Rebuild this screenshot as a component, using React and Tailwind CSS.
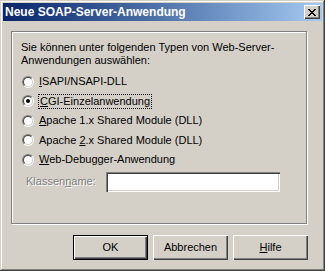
import React from "react";

const font = { fontFamily: '"Liberation Sans", Arial, sans-serif' };

function Radio({ checked }) {
  return (
    <span className="inline-flex h-[12px] w-[12px] shrink-0 rounded-full border border-t-[#808080] border-l-[#808080] border-b-white border-r-white">
      <span className="flex h-full w-full items-center justify-center rounded-full border border-t-[#404040] border-l-[#404040] border-b-[#d4d0c8] border-r-[#d4d0c8] bg-white">
        {checked && <span className="h-[4px] w-[4px] rounded-full bg-black" />}
      </span>
    </span>
  );
}

function Option({ children, checked, focused }) {
  return (
    <div className="flex h-[19.5px] items-center">
      <Radio checked={checked} />
      <span className={focused ? "ml-[4px] border border-dotted border-black px-px leading-[13px]" : "ml-[5px] leading-[13px]"}>
        {children}
      </span>
    </div>
  );
}

function Button({ children, isDefault }) {
  if (isDefault) {
    return (
      <button className="h-[25px] w-[75px] border border-black bg-[#d4d0c8] text-[11px] text-black shadow-[inset_1px_1px_0_#fff,inset_-1px_-1px_0_#404040,inset_-2px_-2px_0_#808080]">
        {children}
      </button>
    );
  }
  return (
    <button className="h-[25px] w-[75px] bg-[#d4d0c8] text-[11px] text-black shadow-[inset_1px_1px_0_#fff,inset_-1px_-1px_0_#404040,inset_-2px_-2px_0_#808080,inset_2px_2px_0_#d4d0c8]">
      {children}
    </button>
  );
}

export default function App() {
  return (
    <div
      className="flex h-[271px] w-[325px] flex-col bg-[#d4d0c8] p-[3px] text-[11px] text-black shadow-[inset_-1px_-1px_0_#404040,inset_1px_1px_0_#d4d0c8,inset_-2px_-2px_0_#808080,inset_2px_2px_0_#fff]"
      style={font}
    >
      <div className="flex h-[18px] items-center justify-between bg-gradient-to-r from-[#0a246a] to-[#a6caf0] pl-[2px] pr-[2px]">
        <span className="text-[12px] font-bold leading-none text-white">Neue SOAP-Server-Anwendung</span>
        <span className="flex h-[14px] w-[16px] items-center justify-center bg-[#d4d0c8] shadow-[inset_1px_1px_0_#fff,inset_-1px_-1px_0_#404040,inset_-2px_-2px_0_#808080]">
          <svg width="8" height="7" viewBox="0 0 8 7" shapeRendering="crispEdges">
            <path
              d="M0 0h2v1h-2zM6 0h2v1h-2zM1 1h2v1h-2zM5 1h2v1h-2zM2 2h4v1h-4zM3 3h2v1h-2zM2 4h4v1h-4zM1 5h2v1h-2zM5 5h2v1h-2zM0 6h2v1h-2zM6 6h2v1h-2z"
              fill="#000"
            />
          </svg>
        </span>
      </div>

      <div className="ml-[8px] mt-[10px] flex h-[193px] w-[296px] flex-col border border-[#808080] pl-[9px] pt-[9px] shadow-[1px_1px_0_#fff,inset_1px_1px_0_#fff]">
        <p className="leading-[13px]">
          Sie können unter folgenden Typen von Web-Server-
          <br />
          Anwendungen auswählen:
        </p>
        <div className="mt-[5px] flex flex-col pl-px">
          <Option>
            <u>I</u>SAPI/NSAPI-DLL
          </Option>
          <Option checked focused>
            <u>C</u>GI-Einzelanwendung
          </Option>
          <Option>
            <u>A</u>pache 1.x Shared Module (DLL)
          </Option>
          <Option>
            Apache <u>2</u>.x Shared Module (DLL)
          </Option>
          <Option>
            <u>W</u>eb-Debugger-Anwendung
          </Option>
        </div>
        <div className="mt-[2px] flex items-center">
          <span className="ml-[5px] w-[80px] text-[#808080] [text-shadow:1px_1px_0_#fff]">
            Klassen<u>n</u>ame:
          </span>
          <span className="h-[20px] w-[174px] bg-white shadow-[inset_1px_1px_0_#808080,inset_2px_2px_0_#404040,inset_-1px_-1px_0_#fff,inset_-2px_-2px_0_#d4d0c8]" />
        </div>
      </div>

      <div className="mt-[11px] flex justify-end gap-[5px] pr-[14px]">
        <Button isDefault>OK</Button>
        <Button>Abbrechen</Button>
        <Button>
          <u>H</u>ilfe
        </Button>
      </div>
    </div>
  );
}
